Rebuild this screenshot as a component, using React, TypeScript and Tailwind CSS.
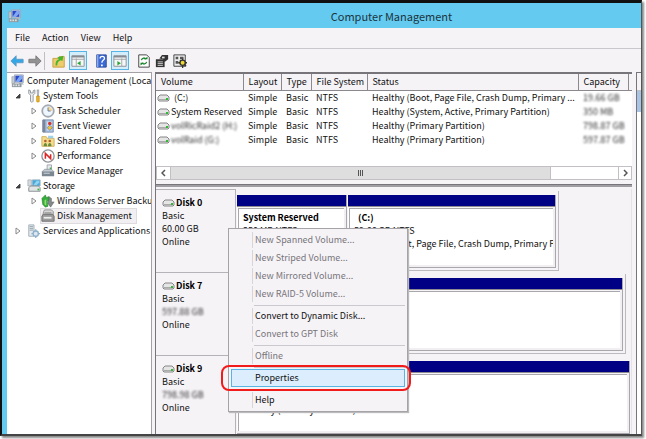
import { useState, type ReactNode } from "react";
import clsx from "clsx";

type IconName =
  | "computer"
  | "tools"
  | "clock"
  | "events"
  | "folders"
  | "performance"
  | "device"
  | "storage"
  | "backup"
  | "disk"
  | "services";

interface TreeItem {
  label: string;
  icon: IconName;
  level: 0 | 1 | 2;
  state: "open" | "closed" | "leaf";
}

const tree: TreeItem[] = [
  { label: "Computer Management (Local)", icon: "computer", level: 0, state: "leaf" },
  { label: "System Tools", icon: "tools", level: 1, state: "open" },
  { label: "Task Scheduler", icon: "clock", level: 2, state: "closed" },
  { label: "Event Viewer", icon: "events", level: 2, state: "closed" },
  { label: "Shared Folders", icon: "folders", level: 2, state: "closed" },
  { label: "Performance", icon: "performance", level: 2, state: "closed" },
  { label: "Device Manager", icon: "device", level: 2, state: "leaf" },
  { label: "Storage", icon: "storage", level: 1, state: "open" },
  { label: "Windows Server Backup", icon: "backup", level: 2, state: "closed" },
  { label: "Disk Management", icon: "disk", level: 2, state: "leaf" },
  { label: "Services and Applications", icon: "services", level: 1, state: "closed" },
];

const volumes = [
  { name: "(C:)", status: "Healthy (Boot, Page File, Crash Dump, Primary ...", capacity: "19.66 GB", hidden: false },
  { name: "System Reserved", status: "Healthy (System, Active, Primary Partition)", capacity: "350 MB", hidden: false },
  { name: "volRicRaid2 (H:)", status: "Healthy (Primary Partition)", capacity: "798.87 GB", hidden: true },
  { name: "volRaid (G:)", status: "Healthy (Primary Partition)", capacity: "597.87 GB", hidden: true },
];

const menuItems = [
  { label: "New Spanned Volume...", enabled: false },
  { label: "New Striped Volume...", enabled: false },
  { label: "New Mirrored Volume...", enabled: false },
  { label: "New RAID-5 Volume...", enabled: false },
  null,
  { label: "Convert to Dynamic Disk...", enabled: true },
  { label: "Convert to GPT Disk", enabled: false },
  null,
  { label: "Offline", enabled: false },
  null,
  { label: "Properties", enabled: true },
  null,
  { label: "Help", enabled: true },
];

function Monitor() {
  return (
    <>
      <path d="M4 1h10v9H4z" fill="#dfe3ea" stroke="#9aa3b2" />
      <path d="M5 2h8v7H5z" fill="#2a49c8" />
      <path d="M5 9l5-7h3v3L9 9z" fill="#7fa6f2" />
      <path d="M1 3h3v8H1z" fill="#c3cad2" stroke="#8a949e" strokeWidth=".6" />
      <path d="M9 10h4l2 2H9z" fill="#b3bbc3" />
      <path d="M1 11h11v4H1z" fill="#8e979d" />
      <path d="M2 12h2v2H2zM5 12h2v2H5zM8 12h2v2H8z" fill="#dbe0e2" />
    </>
  );
}

const drawings: Record<IconName, ReactNode> = {
  computer: <Monitor />,
  tools: (
    <>
      <path
        d="M2 1v4l2 2v7l1 1h1l1-1V7l2-2V1L7 2v2.500H4V2z"
        fill="#eceef0"
        stroke="#80868c"
        strokeWidth=".9"
      />
      <path d="M11.500 1h2l-.5 7h-1z" fill="#c5c9cd" stroke="#81878c" strokeWidth=".6" />
      <path d="M11 8h3v6l-1 1h-1l-1-1z" fill="#f2b21b" stroke="#b27d10" strokeWidth=".6" />
    </>
  ),
  clock: (
    <>
      <circle cx="8" cy="8" r="7" fill="#b4bac1" stroke="#8a9199" />
      <circle cx="8" cy="8" r="5.5" fill="#eef6ff" />
      <path d="M8 8V3a5 5 0 0 1 5 5z" fill="#f4d79b" />
      <path d="M8 4v4h3" fill="none" stroke="#56709a" />
    </>
  ),
  events: (
    <>
      <path d="M2 1h12v14H2z" fill="#a9c1e2" stroke="#7489ac" />
      <path d="M2 1h3v14H2z" fill="#7d8696" />
      <path d="M7 3h5v10H7z" fill="#cfe0f5" />
      <circle cx="10" cy="5" r="2" fill="#d63527" />
      <path d="M10 7l3 3-3 3-3-3z" fill="#f3c230" stroke="#3f62b5" strokeWidth=".6" />
    </>
  ),
  folders: (
    <>
      <path d="M1 3h5l1 2h8v9H1z" fill="#f3dc8d" stroke="#cfac53" />
      <path d="M8 2h6v3H8z" fill="#9fd2ea" />
      <circle cx="5" cy="8" r="1.500" fill="#b2622e" />
      <circle cx="10" cy="8" r="1.500" fill="#b2622e" />
      <path d="M3 14c0-5 4-5 4 0zM8 14c0-5 4-5 4 0z" fill="#6a8a3c" />
    </>
  ),
  performance: (
    <>
      <circle cx="8" cy="8" r="7" fill="#fff" stroke="#8f9296" strokeWidth="1.500" />
      <path d="M5 11V5l6 6V6" fill="none" stroke="#d92626" strokeWidth="1.800" />
    </>
  ),
  device: (
    <>
      <path d="M7 1h5v6H7z" fill="#e7eaee" stroke="#9aa2aa" />
      <path d="M10 4h2v2h-2z" fill="#4bb04f" />
      <path d="M4 6h8l3 3H1z" fill="#c3cbd2" stroke="#7c858e" strokeWidth=".7" />
      <path d="M1 9h14v5H1z" fill="#7b8791" />
      <path d="M3 10h7v1H3z" fill="#dbe2e7" />
    </>
  ),
  storage: (
    <>
      <path d="M6 1h9v7H6z" fill="#45a9dd" stroke="#9fb4c4" />
      <path d="M7 7l4-5h3v2l-3 3z" fill="#90d2f0" />
      <path d="M1 1h4v7H1z" fill="#d5dade" stroke="#8c949b" strokeWidth=".6" />
      <path d="M2 10l2-2h9l2 2v4H2z" fill="#e2e4e5" stroke="#82878a" />
      <path d="M12 11h2v2h-2z" fill="#35b935" />
    </>
  ),
  backup: (
    <>
      <path d="M9 3l3 2v4h3l-4 6-3-4V7z" fill="#85898c" stroke="#565a5c" strokeWidth=".5" />
      <path d="M1 5l4-4 1 3 3-1v4L7 8l1 6-3 1-3-3z" fill="#35ae3b" stroke="#25752a" strokeWidth=".6" />
      <path d="M4 7l2-1v7l-2-1z" fill="#8be070" />
    </>
  ),
  disk: (
    <>
      <path d="M3 3l1-2h8l2 2v4H2z" fill="#d7d7d7" stroke="#888" />
      <path d="M1 8l2-2h10l2 2v6H1z" fill="#9b9b9b" stroke="#6b6b6b" />
      <path d="M3 9h9v2H3z" fill="#eee" />
      <path d="M4 4h8v1H4z" fill="#777" />
    </>
  ),
  services: (
    <>
      <path d="M2 1h6v13H2z" fill="#e4eaee" stroke="#9dabb5" />
      <path d="M3 3h4M3 5h4M3 7h4" stroke="#8d9ba5" />
      <circle cx="10" cy="11" r="3" fill="#dbe8f2" stroke="#8fb0ca" strokeWidth="1.500" />
      <path d="M10 6v2M10 14v2M5 11h2M13 11h2" stroke="#8fb0ca" strokeWidth="1.500" />
    </>
  ),
};

function Icon({ name }: { name: IconName }) {
  return (
    <svg viewBox="0 0 16 16" className="size-3.5 shrink-0" aria-hidden="true">
      {drawings[name]}
    </svg>
  );
}

function VolumeIcon() {
  return (
    <svg viewBox="0 0 13 8" className="h-2 w-[13px] shrink-0" aria-hidden="true">
      <path d="M3 1h7l2 2v3l-1 1H2L1 6V3z" fill="#e5e5e5" stroke="#858585" />
      <path d="M2 5h9v1H2z" fill="#aaa" />
      <path d="M9 4h2v2H9z" fill="#2fba35" />
    </svg>
  );
}

function Expander({ state }: { state: TreeItem["state"] }) {
  return (
    <svg viewBox="0 0 6 8" className="h-2 w-1.5 shrink-0" aria-hidden="true">
      {state === "open" && <path d="M5 2v4H1z" fill="#444" stroke="#333" strokeWidth=".8" />}
      {state === "closed" && <path d="M1 1l4 3-4 3z" fill="#fff" stroke="#888" />}
    </svg>
  );
}

function ToolButton({
  label,
  active,
  children,
}: {
  label: string;
  active?: boolean;
  children: ReactNode;
}) {
  return (
    <button
      type="button"
      aria-label={label}
      className={clsx(
        "flex h-[19px] w-[18px] items-center justify-center border",
        active ? "border-[#55b5e6] bg-[#d4edfb]" : "border-transparent"
      )}
    >
      <svg viewBox="0 0 16 16" className="size-3.5">
        {children}
      </svg>
    </button>
  );
}

function Toolbar() {
  return (
    <div className="flex h-6 items-center border-t border-[#c9c7cb] pl-px">
      <ToolButton label="Back">
        <path d="M1 8l6-6v4h8v4H7v4z" fill="#35a7e6" stroke="#5a9cc4" />
      </ToolButton>
      <ToolButton label="Forward">
        <path d="M15 8L9 2v4H1v4h8v4z" fill="#929292" stroke="#777" />
      </ToolButton>
      <div className="mr-1 h-4.5 w-px bg-[#c0bec2]" />
      <div className="flex gap-px pl-px">
        <ToolButton label="Up one level">
          <path d="M1 5h6l1-2h6v12H1z" fill="#eecb6b" stroke="#c49d3c" />
          <path d="M4 13c0-4 1-6 4-7L6 4l7-2-1 6-2-1c-3 1-4 3-4 6z" fill="#46b631" />
        </ToolButton>
        <ToolButton label="Show console tree" active>
          <path d="M1 2h14v12H1z" fill="#f7f7f7" stroke="#858b90" />
          <path d="M1 2h14v2H1z" fill="#858b90" />
          <path d="M6 5v9M1 6h14" stroke="#9ba0a4" />
          <path d="M11 8v5L7 10.500z" fill="#28a638" />
        </ToolButton>
      </div>
      <div className="flex gap-px pl-[5px]">
        <ToolButton label="Help">
          <path d="M3 1h11v14H3z" fill="#3c69d4" stroke="#24459a" />
          <path d="M3 1h2v14H3z" fill="#90aae5" />
          <path d="M7 5c0-3 5-3 5 0 0 2-3 2-3 5" fill="none" stroke="#fff" strokeWidth="1.500" />
          <path d="M8 12h2v2H8z" fill="#fff" />
        </ToolButton>
        <ToolButton label="Show action pane" active>
          <path d="M1 2h14v12H1z" fill="#f7f7f7" stroke="#858b90" />
          <path d="M1 2h14v2H1z" fill="#858b90" />
          <path d="M10 5v9M1 6h14" stroke="#9ba0a4" />
          <path d="M5 8v5l4-2.500z" fill="#28a638" />
        </ToolButton>
      </div>
      <div className="flex pl-1.5">
        <ToolButton label="Refresh">
          <path d="M2 1h9l3 3v11H2z" fill="#fff" stroke="#333" />
          <path d="M5 7c1-3 4-3 5-1M11 9c-1 3-4 3-5 1" fill="none" stroke="#16852a" strokeWidth="1.500" />
          <path d="M8 6h4V3zM8 10H4v3z" fill="#16852a" />
        </ToolButton>
        <ToolButton label="Properties">
          <path d="M1 6h10v9H1z" fill="#333" />
          <path d="M3 9h6M3 11h6M3 13h6" stroke="#ddd" />
          <path d="M5 5l3-4h7v5l-4 3-2-3z" fill="#333" />
          <path d="M8 3h3v2H8z" fill="#ddd" />
        </ToolButton>
        <ToolButton label="Settings">
          <path d="M1 1h13v13H1z" fill="#eee" stroke="#333" />
          <path d="M3 3h3v3H3zM3 8h3v3H3zM8 3h4v3H8z" fill="#555" />
          <circle cx="11" cy="10" r="3" fill="#eed636" stroke="#333" strokeWidth="1.500" />
          <path d="M11 5v2M11 13v3M6 10h2M14 10h2M8 7l1 1M13 12l2 2" stroke="#333" strokeWidth="1.500" />
        </ToolButton>
      </div>
    </div>
  );
}

function ConsoleTree() {
  return (
    <nav className="w-[145px] shrink-0 overflow-hidden border-t border-r border-[#a3a1a6] bg-white">
      <ul>
        {tree.map((item) => (
          <li
            key={item.label}
            className={clsx(
              "flex h-[15px] items-center whitespace-nowrap",
              item.level === 0 && "pl-1",
              item.level === 1 && "gap-1.5 pl-2",
              item.level === 2 && "gap-1 pl-6"
            )}
          >
            {item.level > 0 && <Expander state={item.state} />}
            <a
              href="#"
              className={clsx(
                "flex h-3.5 items-center gap-0.5 pr-1",
                item.icon === "disk" && "bg-[#f1eff2] outline outline-[#dddbdf]"
              )}
            >
              <Icon name={item.icon} />
              {item.label}
            </a>
          </li>
        ))}
      </ul>
    </nav>
  );
}

function VolumeList() {
  return (
    <div className="border-t-2 border-[#77757a] bg-white">
      <div className="h-[92px] overflow-hidden">
        <table className="w-full table-fixed text-left whitespace-nowrap">
          <colgroup>
            <col className="w-[87px]" />
            <col className="w-[38px]" />
            <col className="w-[30px]" />
            <col className="w-14" />
            <col />
            <col className="w-[50px]" />
            <col className="w-1" />
          </colgroup>
          <thead className="bg-[#f6f3f7]">
            <tr className="h-4 border-b border-[#8b898e]">
              {["Volume", "Layout", "Type", "File System", "Status", "Capacity"].map((name) => (
                <th key={name} className="border-r border-[#8b898e] pl-[5px] font-normal">
                  {name}
                </th>
              ))}
              <td />
            </tr>
          </thead>
          <tbody>
            {volumes.map((volume, index) => (
              <tr key={volume.name} className="h-3.5">
                <td className="pl-px">
                  <span className={clsx("flex items-center", index === 0 ? "gap-1" : "gap-px")}>
                    <VolumeIcon />
                    <span className={clsx(volume.hidden && "text-[#333] blur-[1px]")}>{volume.name}</span>
                  </span>
                </td>
                <td className="pl-[5px]">Simple</td>
                <td className="pl-[5px]">Basic</td>
                <td className="pl-[5px]">NTFS</td>
                <td className="pl-[5px]">{volume.status}</td>
                <td className="pl-[5px]">
                  <span className="text-[#333] blur-[1px]">{volume.capacity}</span>
                </td>
                <td />
              </tr>
            ))}
          </tbody>
        </table>
      </div>
      <div className="flex h-3.5 border border-[#c2c0c4]">
        <button type="button" aria-label="Scroll left" className="flex w-[13px] items-center justify-center">
          <svg viewBox="0 0 6 8" className="h-2 w-1.5">
            <path d="M4 1L1 4l3 3" fill="none" stroke="#555" strokeWidth="1.500" />
          </svg>
        </button>
        <div className="flex-1">
          <div className="flex h-full w-[85%] items-center justify-center gap-px border-x border-[#c2c0c4] bg-[#dedede]">
            <i className="h-1.5 w-px bg-[#555]" />
            <i className="h-1.5 w-px bg-[#555]" />
            <i className="h-1.5 w-px bg-[#555]" />
          </div>
        </div>
        <button
          type="button"
          aria-label="Scroll right"
          className="flex w-[13px] items-center justify-center border-l border-[#c2c0c4]"
        >
          <svg viewBox="0 0 6 8" className="h-2 w-1.5">
            <path d="M2 1l3 3-3 3" fill="none" stroke="#555" strokeWidth="1.500" />
          </svg>
        </button>
      </div>
    </div>
  );
}

function Partition({
  name,
  size,
  status,
  className,
}: {
  name: string;
  size: string;
  status: string;
  className?: string;
}) {
  return (
    <div className={clsx("flex h-[73px] flex-col border-r border-b border-[#a9a7ab]", className)}>
      <div className="h-3 border-b border-[#8d8b90] bg-[#000084]" />
      <div className="mt-px flex-1 border-r-2 border-b-2 border-[#f1eff2] bg-white pl-px">
        <div className="h-full overflow-hidden border-t border-l border-[#a9a7ab] pt-0.5 pl-1 leading-[13px] whitespace-nowrap">
          <p className={clsx("font-bold text-black", name === "(C:)" && "pl-1")}>{name}</p>
          <p>{size}</p>
          <p>{status}</p>
        </div>
      </div>
    </div>
  );
}

function DiskRow({
  name,
  size,
  hidden,
  frame,
  children,
}: {
  name: string;
  size: string;
  hidden?: boolean;
  frame: string;
  children: ReactNode;
}) {
  return (
    <section className="flex h-[83px]">
      <div className="w-20 shrink-0 border-t border-r border-[#b5b3b8] pt-1.5 pl-1.5 leading-[13px]">
        <h2 className="flex items-center gap-px font-bold text-black">
          <VolumeIcon />
          {name}
        </h2>
        <p>Basic</p>
        <p className={clsx(hidden && "w-max text-[#333] blur-[1px]")}>{size}</p>
        <p>Online</p>
      </div>
      <div className={clsx("mt-0.5 mb-px flex min-w-0 flex-1 gap-px border-[#bcbabf] pt-1 pl-px", frame)}>
        {children}
      </div>
    </section>
  );
}

function ContextMenu() {
  const [selected, setSelected] = useState("Properties");

  return (
    <div
      role="menu"
      className="absolute top-[39px] left-[72px] w-[180px] border border-[#a5a3a8] bg-[#f6f3f7] p-0.5 shadow-[1px_1px_1px_#bbb]"
    >
      {menuItems.map((item, index) =>
        item ? (
          <div key={item.label} className="relative">
            <button
              type="button"
              role="menuitem"
              disabled={!item.enabled}
              onMouseEnter={() => setSelected(item.label)}
              className={clsx(
                "flex h-[18px] w-full items-center border text-left",
                item.label === selected ? "border-[#58b4e5] bg-[#dceefd]" : "border-transparent",
                item.enabled ? "text-[#111]" : "text-[#77757a]"
              )}
            >
              <span
                className={clsx(
                  "mr-0.5 h-full w-[21px] border-r",
                  item.label === selected ? "border-transparent" : "border-[#d7d5d9]"
                )}
              />
              {item.label}
            </button>
            {item.label === "Properties" && (
              <div className="pointer-events-none absolute -inset-y-1 -right-1.5 -left-2.5 rounded-lg border-2 border-[#f21b1b]" />
            )}
          </div>
        ) : (
          <div key={index} className="flex h-1 items-center pl-[23px]">
            <hr className="w-full border-[#cbc9cd]" />
          </div>
        )
      )}
    </div>
  );
}

export default function App() {
  return (
    <div className="overflow-hidden bg-white pr-1 pb-1 font-['Noto_Sans_CJK_SC',sans-serif] text-[9px] leading-3.5 text-[#111]">
      <div className="border-t-3 border-r border-b-2 border-l-2 border-[#111] border-r-[#555] border-b-[#444] bg-[#64caef] pl-[5px] shadow-[2px_2px_2px_#888]">
        <header className="flex h-[25px] items-center">
          <svg viewBox="0 0 16 16" className="ml-px size-3.5" aria-hidden="true">
            <Monitor />
          </svg>
          <h1 className="flex-1 pl-[120px] text-center text-[11px] text-[#1b3440]">Computer Management</h1>
        </header>
        <div className="bg-[#f6f3f7]">
          <nav className="flex h-5 items-center gap-3 pl-2">
            {["File", "Action", "View", "Help"].map((label) => (
              <button type="button" key={label}>
                {label}
              </button>
            ))}
          </nav>
          <Toolbar />
          <main className="flex">
            <ConsoleTree />
            <div className="ml-[3px] min-w-0 flex-1 border-l border-[#77757a]">
              <VolumeList />
              <div className="mt-1 h-[3px] border-t border-[#77757a] bg-[#a09ea3]" />
              <div className="relative mt-0.5 h-[245px] overflow-hidden border-r border-[#e6e3e8]">
                <DiskRow name="Disk 0" size="60.00 GB" frame="mr-[72px] border-r border-b pr-0.5">
                  <Partition name="System Reserved" size="350 MB NTFS" status="Healthy (System)" className="w-[110px] shrink-0" />
                  <Partition
                    name="(C:)"
                    size="59.66 GB NTFS"
                    status="Healthy (Boot, Page File, Crash Dump, Primary Partition)"
                    className="min-w-0 flex-1"
                  />
                </DiskRow>
                <DiskRow name="Disk 7" size="597.88 GB" hidden frame="mr-[5px] border-r border-b pr-0.5">
                  <Partition name="volRaid (G:)" size="597.87 GB NTFS" status="Healthy (Primary Partition)" className="flex-1" />
                </DiskRow>
                <DiskRow name="Disk 9" size="798.98 GB" hidden frame="pr-px">
                  <Partition name="volRicRaid2 (H:)" size="798.87 GB NTFS" status="Healthy (Primary Partition)" className="flex-1" />
                </DiskRow>
                <ContextMenu />
              </div>
            </div>
            <aside className="ml-1 w-[5px] border-t border-l border-[#77757a] bg-white">
              <div className="h-[18px] border-b border-[#c2c0c4] bg-[#f6f3f7]" />
              <div className="h-[21px] bg-[#a9c3e2]" />
            </aside>
          </main>
        </div>
      </div>
    </div>
  );
}
